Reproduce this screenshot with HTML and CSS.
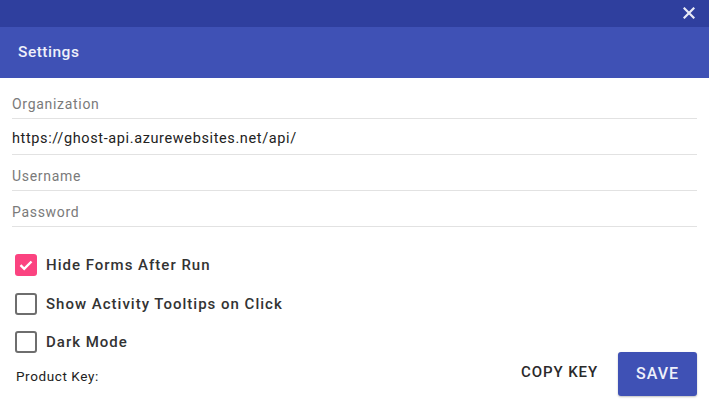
FILE: index.html
```html
<!DOCTYPE html>
<html>
<head>
<meta charset="utf-8">
<link rel="stylesheet" href="styles.css">
</head>
<body>
<div class="titlebar">
  <svg class="close" width="12" height="12" viewBox="0 0 12 12"><path d="M1.5 1.5L10.5 10.5M10.5 1.5L1.5 10.5" stroke="#e8eaf6" stroke-width="2.2" stroke-linecap="square"/></svg>
</div>
<div class="header">Settings</div>
<div class="form">
  <div class="field first"><span class="placeholder">Organization</span></div>
  <div class="field"><span class="value">https://ghost-api.azurewebsites.net/api/</span></div>
  <div class="field"><span class="placeholder">Username</span></div>
  <div class="field"><span class="placeholder">Password</span></div>
</div>
<div class="options">
  <label class="option"><span class="box checked"><svg width="22" height="22" viewBox="0 0 22 22"><path d="M5.5 11.2L9.2 14.8L16.5 7.5" fill="none" stroke="#fff" stroke-width="2.4"/></svg></span><span class="opt-text">Hide Forms After Run</span></label>
  <label class="option"><span class="box"></span><span class="opt-text">Show Activity Tooltips on Click</span></label>
  <label class="option"><span class="box"></span><span class="opt-text">Dark Mode</span></label>
</div>
<div class="footer">
  <span class="product">Product Key:</span>
  <div class="actions">
    <span class="copy">COPY KEY</span>
    <span class="save">SAVE</span>
  </div>
</div>
</body>
</html>
```

FILE: styles.css
```css
html, body {
  margin: 0;
  padding: 0;
  background: #ffffff;
  font-family: Roboto, "Liberation Sans", sans-serif;
  width: 709px;
  height: 408px;
  overflow: hidden;
}
.titlebar {
  height: 27px;
  background: #2f3f9e;
  display: flex;
  justify-content: flex-end;
  align-items: flex-start;
}
.close {
  margin-top: 7px;
  margin-right: 14px;
}
.header {
  height: 51px;
  background: #3f51b5;
  color: #eef0fa;
  font-size: 15.5px;
  font-weight: 500;
  letter-spacing: 0.5px;
  padding-left: 18px;
  line-height: 50px;
  box-sizing: border-box;
}
.form {
  padding: 0 12px;
}
.field {
  height: 36px;
  box-sizing: border-box;
  border-bottom: 1px solid #e2e2e2;
  padding-top: 11px;
  line-height: 20px;
}
.field.first {
  height: 41px;
  padding-top: 16px;
}
.placeholder {
  font-size: 14px;
  color: #7a7a7a;
  letter-spacing: 0.7px;
}
.value {
  font-size: 14.5px;
  color: #222222;
  letter-spacing: 0.62px;
  position: relative;
  top: -2px;
}
.options {
  padding: 27px 0 0 15px;
  display: flex;
  flex-direction: column;
  gap: 16.5px;
}
.option {
  display: flex;
  align-items: center;
  height: 22px;
}
.box {
  width: 22px;
  height: 22px;
  box-sizing: border-box;
  border: 2.5px solid #6e6e6e;
  border-radius: 3px;
  display: block;
}
.box.checked {
  border: none;
  background: #fb4380;
}
.box svg {
  display: block;
}
.opt-text {
  margin-left: 9px;
  font-size: 15px;
  font-weight: 500;
  color: #333333;
  letter-spacing: 1px;
}
.footer {
  margin-top: -1.5px;
  padding: 0 12px 0 16px;
  display: flex;
  justify-content: space-between;
  align-items: center;
}
.product {
  font-size: 13.5px;
  color: #222222;
  letter-spacing: 0.6px;
  padding-top: 5px;
}
.actions {
  display: flex;
  align-items: center;
}
.copy {
  font-size: 15px;
  font-weight: 500;
  color: #2a2a2a;
  letter-spacing: 0.9px;
  margin-right: 20px;
  padding-bottom: 4px;
}
.save {
  width: 79px;
  height: 44px;
  box-sizing: border-box;
  background: #3f51b5;
  color: #eef0fa;
  font-size: 16px;
  font-weight: 500;
  letter-spacing: 1px;
  border-radius: 3px;
  display: flex;
  align-items: center;
  justify-content: center;
  box-shadow: 0 1px 2px rgba(0,0,0,0.25);
}
```
